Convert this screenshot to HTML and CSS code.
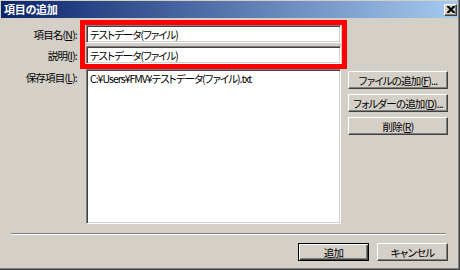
FILE: index.html
```html
<!DOCTYPE html>
<html lang="ja">

<head>
    <meta charset="UTF-8">
    <title>項目の追加</title>
    <link rel="stylesheet" href="styles.css">
</head>

<body>
    <div class="window">
        <div class="titlebar">
            <span class="title">項目の追加</span>
            <span class="close">
                <svg width="8" height="7" viewBox="0 0 8 7">
                    <path d="M0 0h2l2 2 2-2h2v1l-2.5 2.5 2.5 2.5v1h-2l-2-2-2 2h-2v-1l2.5-2.5-2.5-2.5z" fill="#000"/>
                </svg>
            </span>
        </div>
        <div class="content">
            <div class="form">
                <label class="label">項目名(<u>N</u>):</label>
                <div class="field">テストデータ(ファイル)</div>
                <div></div>

                <label class="label">説明(<u>I</u>):</label>
                <div class="field">テストデータ(ファイル)</div>
                <div></div>

                <label class="label label-top">保存項目(<u>L</u>):</label>
                <div class="list">
                    <div class="list-item">C:¥Users¥FMV¥テストデータ(ファイル).txt</div>
                </div>
                <div class="side-buttons">
                    <button class="btn">ファイルの追加(<u>F</u>)...</button>
                    <button class="btn">フォルダーの追加(<u>D</u>)...</button>
                    <button class="btn">削除(<u>R</u>)</button>
                </div>
            </div>
            <div class="separator"></div>
            <div class="footer">
                <button class="btn btn-default">追加</button>
                <button class="btn">キャンセル</button>
            </div>
        </div>
        <!-- annotation box drawn over the two text fields -->
        <div class="highlight"></div>
    </div>
</body>

</html>
```

FILE: styles.css
```css
* {
    margin: 0;
    padding: 0;
    box-sizing: border-box;
}

body {
    font-family: "Noto Sans CJK JP", sans-serif;
    font-size: 10.5px;
    letter-spacing: -0.8px;
    font-feature-settings: "palt";
    color: #000;
    background-color: #d4d0c8;
}

.window {
    position: relative;
    width: 460px;
    height: 270px;
    padding: 1px;
    background-color: #d4d0c8;
    border-right: 1px solid #404040;
    border-bottom: 1px solid #404040;
    box-shadow: inset -1px -1px #808080;
}

.titlebar {
    height: 17px;
    display: flex;
    align-items: center;
    justify-content: space-between;
    padding: 0 1px 0 3px;
    background: linear-gradient(to right, #0a246a, #a6caf0);
}

.title {
    color: #fff;
    font-weight: bold;
    font-size: 11px;
    letter-spacing: -0.3px;
    line-height: 17px;
}

.close {
    width: 13px;
    height: 12px;
    display: flex;
    align-items: center;
    justify-content: center;
    background-color: #d4d0c8;
    border: 1px solid;
    border-color: #fff #404040 #404040 #fff;
    box-shadow: inset -1px -1px #808080;
}

.content {
    padding-top: 7px;
}

.form {
    display: grid;
    grid-template-columns: 76px 255px 100px;
    grid-template-rows: 18px 18px 157px;
    column-gap: 8px;
    row-gap: 3px;
    margin-left: 1px;
}

.form > .label-top,
.form > .list,
.form > .side-buttons {
    margin-top: 2px;
}

.label {
    display: flex;
    align-items: center;
    justify-content: flex-end;
    white-space: nowrap;
    padding-right: 1px;
}

.label-top {
    align-items: flex-start;
    padding-top: 1px;
}

.field,
.list {
    background-color: #fff;
    letter-spacing: -1px;
    border: 1px solid;
    border-color: #808080 #fff #fff #808080;
    box-shadow: inset 1px 1px #404040, inset -1px -1px #d4d0c8;
}

.field {
    display: flex;
    align-items: center;
    padding-left: 3px;
    white-space: nowrap;
}

.list {
    padding: 2px 3px;
}

.list-item {
    line-height: 13px;
    white-space: nowrap;
}

.side-buttons {
    display: flex;
    flex-direction: column;
    gap: 5px;
    margin-left: -1px;
    padding-top: 2px;
}

.btn {
    height: 18px;
    font-family: inherit;
    font-size: 10.5px;
    letter-spacing: -0.8px;
    font-feature-settings: "palt";
    color: #000;
    background-color: #d4d0c8;
    border: 1px solid;
    border-color: #fff #404040 #404040 #fff;
    box-shadow: inset -1px -1px #808080;
    white-space: nowrap;
}

.side-buttons .btn {
    width: 100px;
}

.separator {
    height: 2px;
    margin: 9px 12px 0 10px;
    border-top: 1px solid #808080;
    border-bottom: 1px solid #fff;
}

.footer {
    display: flex;
    justify-content: flex-end;
    gap: 8px;
    padding: 8px 10px 0 0;
}

.footer .btn {
    width: 71px;
}

.btn-default {
    border: 1px solid #000;
    box-shadow: inset 1px 1px #fff, inset -1px -1px #404040, inset -2px -2px #808080;
}

.highlight {
    position: absolute;
    left: 80px;
    top: 20px;
    width: 267px;
    height: 49px;
    border: 5px solid #ff0000;
}
```
